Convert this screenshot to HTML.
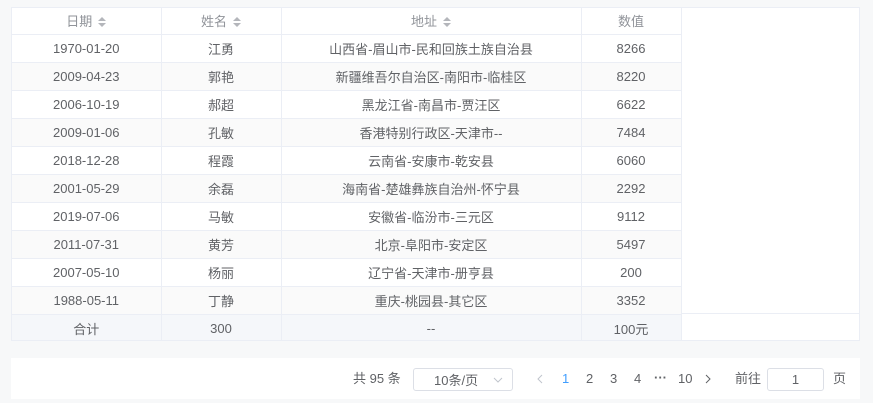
<!DOCTYPE html>
<html><head><meta charset="utf-8"><style>
*{box-sizing:border-box;margin:0;padding:0}
body{width:873px;height:403px;background:#f7f8f9;font-family:"Liberation Sans","Noto Sans CJK SC",sans-serif;font-size:13px;color:#606266;position:relative;overflow:hidden}
.tw{position:absolute;left:11px;top:7px;width:849px;height:334px;background:#fff;border:1px solid #ebeef5;border-bottom:none;overflow:hidden}
table{border-collapse:collapse;table-layout:fixed;position:absolute;left:0;top:0}
td,th{border-right:1px solid #ebeef5;border-bottom:1px solid #ebeef5;text-align:center;font-weight:normal;white-space:nowrap;overflow:hidden}
th{height:26px;color:#909399}
td{height:28px}
tr.s td{background:#fafafa}
tr.sum td{background:#f5f7fa;height:28px}
.car{display:inline-block;vertical-align:middle;margin-left:6px;width:8px;height:10px;position:relative;top:-1px}
.car:before,.car:after{content:"";position:absolute;left:0;border-left:4px solid transparent;border-right:4px solid transparent}
.car:before{top:0;border-bottom:4px solid #b4b6bb}
.car:after{bottom:0;border-top:4px solid #b4b6bb}
.pg{position:absolute;left:11px;top:358px;width:849px;height:41px;background:#fff}
.pg span{position:absolute;top:14px;line-height:14px;color:#606266}
.sel{position:absolute;left:402px;top:10px;width:100px;height:23px;border:1px solid #dcdfe6;border-radius:3px}
.inp{position:absolute;left:756px;top:10px;width:57px;height:23px;border:1px solid #dcdfe6;border-radius:3px;text-align:center;line-height:21px;color:#606266}
</style></head><body>
<div class="tw">
<table>
<colgroup><col style="width:149px"><col style="width:120px"><col style="width:300px"><col style="width:100px"></colgroup>
<tr><th>日期<i class="car"></i></th><th>姓名<i class="car"></i></th><th>地址<i class="car"></i></th><th>数值</th></tr>
<tr><td>1970-01-20</td><td>江勇</td><td>山西省-眉山市-民和回族土族自治县</td><td>8266</td></tr>
<tr class="s"><td>2009-04-23</td><td>郭艳</td><td>新疆维吾尔自治区-南阳市-临桂区</td><td>8220</td></tr>
<tr><td>2006-10-19</td><td>郝超</td><td>黑龙江省-南昌市-贾汪区</td><td>6622</td></tr>
<tr class="s"><td>2009-01-06</td><td>孔敏</td><td>香港特别行政区-天津市--</td><td>7484</td></tr>
<tr><td>2018-12-28</td><td>程霞</td><td>云南省-安康市-乾安县</td><td>6060</td></tr>
<tr class="s"><td>2001-05-29</td><td>余磊</td><td>海南省-楚雄彝族自治州-怀宁县</td><td>2292</td></tr>
<tr><td>2019-07-06</td><td>马敏</td><td>安徽省-临汾市-三元区</td><td>9112</td></tr>
<tr class="s"><td>2011-07-31</td><td>黄芳</td><td>北京-阜阳市-安定区</td><td>5497</td></tr>
<tr><td>2007-05-10</td><td>杨丽</td><td>辽宁省-天津市-册亨县</td><td>200</td></tr>
<tr class="s"><td>1988-05-11</td><td>丁静</td><td>重庆-桃园县-其它区</td><td>3352</td></tr>
<tr class="sum"><td>合计</td><td>300</td><td>--</td><td>100元</td></tr>
</table>
<div style="position:absolute;left:669px;right:0;top:305px;border-top:1px solid #ebeef5"></div>
<div style="position:absolute;left:0;right:0;bottom:0;border-top:1px solid #ebeef5"></div>
</div>
<div class="pg">
<span style="left:342px">共 95 条</span>
<div class="sel"><span style="left:20px;top:5px">10条/页</span><svg style="position:absolute;right:9px;top:8px" width="10" height="6" viewBox="0 0 10 6"><path d="M1 1l4 4 4-4" fill="none" stroke="#c0c4cc" stroke-width="1"/></svg></div>
<svg style="position:absolute;left:526px;top:16px" width="6" height="10" viewBox="0 0 6 10"><path d="M5 1L1 5l4 4" fill="none" stroke="#c0c4cc"/></svg>
<span style="left:551px;color:#409eff">1</span>
<span style="left:575px">2</span>
<span style="left:599px">3</span>
<span style="left:623px">4</span>
<span style="left:643px;font-weight:bold;top:13px">···</span>
<span style="left:667px">10</span>
<svg style="position:absolute;left:694px;top:16px" width="6" height="10" viewBox="0 0 6 10"><path d="M1 1l4 4-4 4" fill="none" stroke="#606266"/></svg>
<span style="left:724px">前往</span>
<div class="inp">1</div>
<span style="left:822px">页</span>
</div>
</body></html>
